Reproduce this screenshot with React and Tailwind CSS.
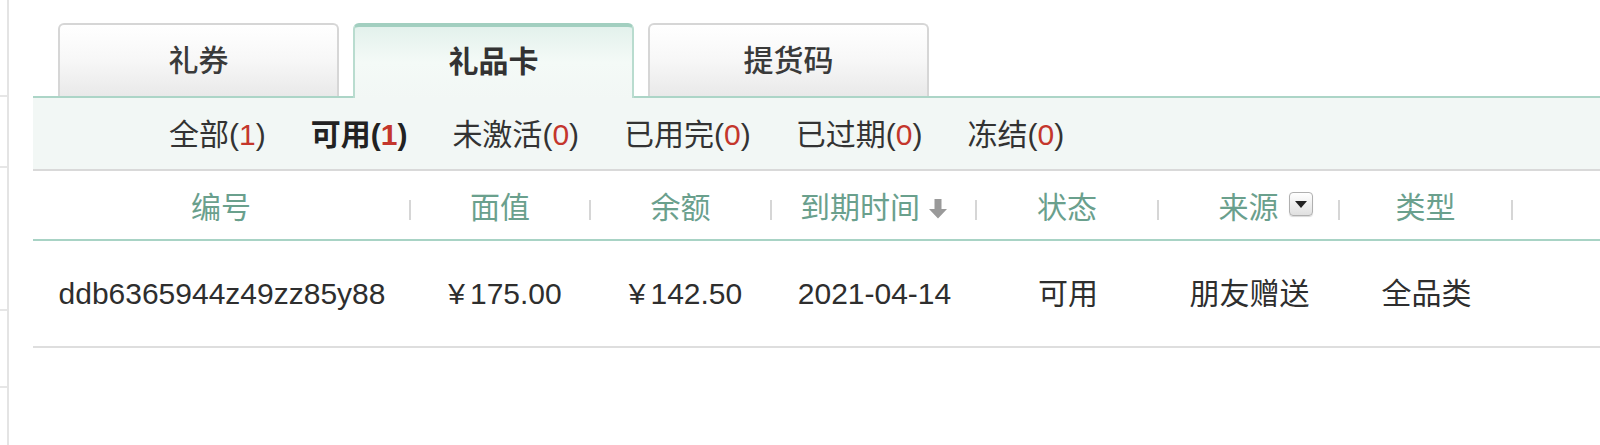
import React from "react";

function SortArrow() {
  return (
    <svg width="18" height="20" viewBox="0 0 18 20" className="ml-[9px] mt-[1px]">
      <path d="M5.5 0h7v10h5.5l-9 9.5L0 10h5.5z" fill="#9a9a9a" />
    </svg>
  );
}

function DropBox() {
  return (
    <div className="ml-[10px] mr-[-34px] mb-[8px] w-[24px] h-[24px] rounded-[4px] border border-[#b0b0b0] bg-gradient-to-b from-white to-[#e0e0e0] flex items-center justify-center shadow-[0_1px_1px_rgba(0,0,0,0.15)]">
      <svg width="12" height="7" viewBox="0 0 12 7">
        <path d="M0 0h12L6 7z" fill="#222" />
      </svg>
    </div>
  );
}

function HeadCell({ children }) {
  return (
    <div className="flex items-center h-full pt-[6px]">
      <div className="flex-1 flex items-center justify-center">{children}</div>
      <div className="w-[2px] h-[20px] bg-[#d6d6d6] mt-[4px]" />
    </div>
  );
}

function Filter({ label, n, active }) {
  return (
    <span className={active ? "font-bold text-[#222]" : "text-[#333]"}>
      {label}(<span className="text-[#c4362c]">{n}</span>)
    </span>
  );
}

function Money({ v }) {
  return (
    <div className="text-center pl-[8px]">
      <span className="mr-[5px]">¥</span>
      {v}
    </div>
  );
}

export default function App() {
  return (
    <div className="w-[1600px] h-[445px] bg-white flex overflow-hidden font-['Liberation_Sans','Noto_Sans_CJK_SC',sans-serif] text-[30px] leading-none text-[#333]">
      <div className="w-[9px] shrink-0 border-r-2 border-[#e4e4e4] flex flex-col">
        <div className="h-[97px] shrink-0 border-b-2 border-[#e6e6e6]" />
        <div className="h-[71px] shrink-0 border-b-2 border-[#e6e6e6]" />
        <div className="h-[143px] shrink-0 border-b-2 border-[#e6e6e6]" />
        <div className="h-[77px] shrink-0 border-b-2 border-[#e6e6e6]" />
      </div>

      <div className="flex-1 pl-[24px] pt-[23px] flex flex-col">
        <div className="flex items-start gap-[14px] pl-[25px] h-[73px] relative z-10">
          <div className="w-[281px] h-[73px] border-2 border-b-0 border-[#d6d6d6] rounded-t-[6px] bg-gradient-to-b from-white via-[#f7f7f7] to-[#e9e9e9] flex items-center justify-center font-medium text-[#3a3a3a]">
            礼券
          </div>
          <div className="w-[281px] h-[75px] border-x-2 border-t-4 border-x-[#b9dccf] border-t-[#a2cfc0] rounded-t-[6px] bg-gradient-to-b from-[#e3f1ec] via-[#f4faf7] to-[#f2f7f5] flex items-center justify-center font-bold text-[#333] pb-[2px]">
            礼品卡
          </div>
          <div className="w-[281px] h-[73px] border-2 border-b-0 border-[#d6d6d6] rounded-t-[6px] bg-gradient-to-b from-white via-[#f7f7f7] to-[#e9e9e9] flex items-center justify-center font-medium text-[#3a3a3a]">
            提货码
          </div>
        </div>

        <div className="h-[75px] shrink-0 bg-[#f2f7f5] border-t-2 border-t-[#acd5c7] border-b-2 border-b-[#d9d9d9] flex items-center pl-[136px] gap-[45px] pt-[2px]">
          <Filter label="全部" n="1" />
          <Filter label="可用" n="1" active />
          <Filter label="未激活" n="0" />
          <Filter label="已用完" n="0" />
          <Filter label="已过期" n="0" />
          <Filter label="冻结" n="0" />
        </div>

        <div className="h-[70px] shrink-0 grid grid-cols-[378px_180px_181px_205px_182px_181px_173px_1fr] border-b-2 border-[#a8d3c5] text-[#6aa08d]">
          <HeadCell>编号</HeadCell>
          <HeadCell>面值</HeadCell>
          <HeadCell>余额</HeadCell>
          <HeadCell>
            到期时间
            <SortArrow />
          </HeadCell>
          <HeadCell>状态</HeadCell>
          <HeadCell>
            来源
            <DropBox />
          </HeadCell>
          <HeadCell>类型</HeadCell>
          <div />
        </div>

        <div className="h-[107px] shrink-0 grid grid-cols-[378px_180px_181px_205px_182px_181px_173px_1fr] items-center border-b-2 border-[#dedede] text-[#2e2e2e]">
          <div className="text-center">ddb6365944z49zz85y88</div>
          <Money v="175.00" />
          <Money v="142.50" />
          <div className="text-center">2021-04-14</div>
          <div className="text-center">可用</div>
          <div className="text-center">朋友赠送</div>
          <div className="text-center">全品类</div>
          <div />
        </div>
      </div>
    </div>
  );
}
